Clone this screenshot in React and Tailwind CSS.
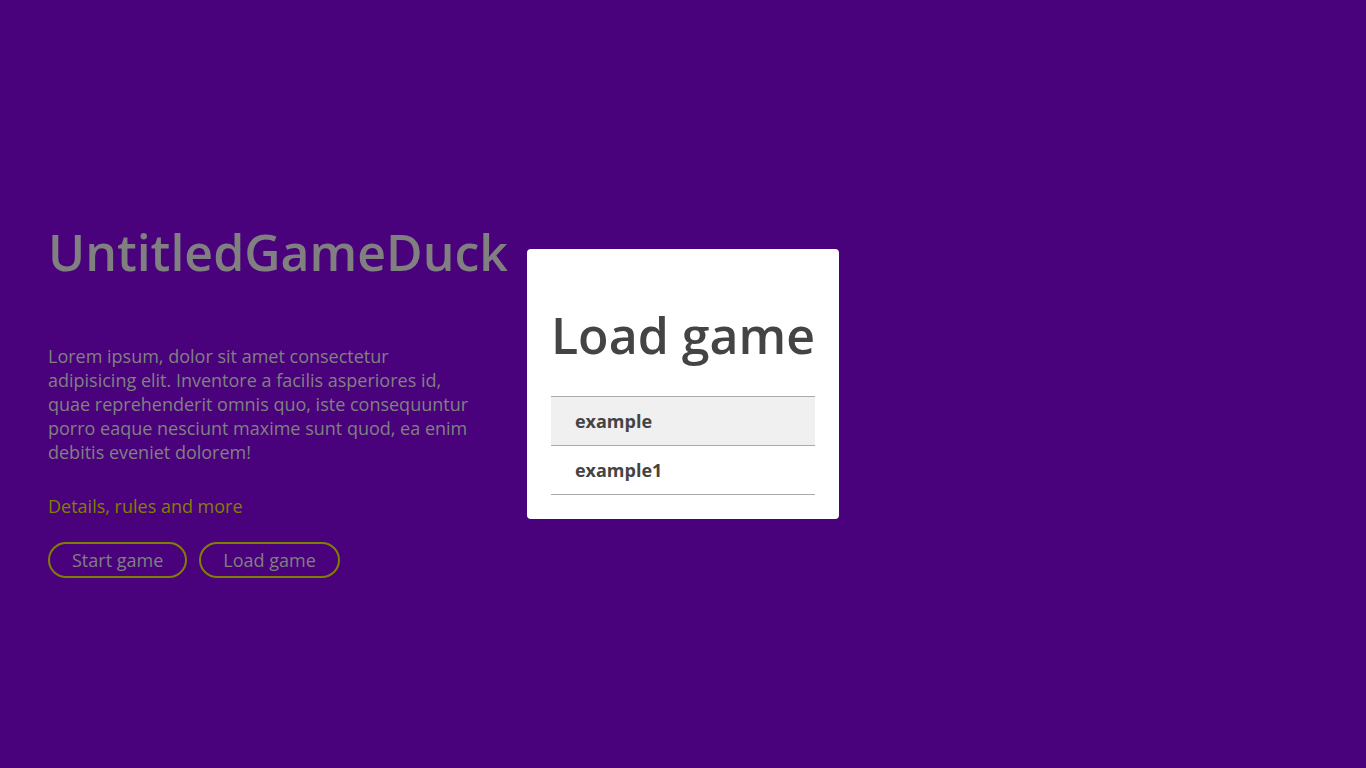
import React, { useState } from "react";

const saves = ["example", "example1"];

export default function App() {
  const [hovered, setHovered] = useState(0);

  return (
    <div
      className="min-h-screen w-full bg-[#4a027c] flex items-center px-12"
      style={{ fontFamily: '"Open Sans", "Noto Sans", sans-serif' }}
    >
      {/* intro */}
      <div className="mt-[28px] flex flex-col">
        <h1 className="text-[50px] leading-[68px] font-semibold text-[#808080] whitespace-nowrap">
          UntitledGameDuck
        </h1>
        <p className="mt-[58px] w-[430px] text-[18px] leading-[24px] text-[#808080]">
          Lorem ipsum, dolor sit amet consectetur adipisicing elit. Inventore a facilis
          asperiores id, quae reprehenderit omnis quo, iste consequuntur porro eaque
          nesciunt maxime sunt quod, ea enim debitis eveniet dolorem!
        </p>
        <a href="#" className="mt-[30px] text-[18px] leading-[24px] text-[#808000]">
          Details, rules and more
        </a>
        <div className="mt-[24px] flex gap-3">
          <button className="h-9 px-[22px] rounded-full border-2 border-[#808000] text-[18px] text-[#808080]">
            Start game
          </button>
          <button className="h-9 px-[22px] rounded-full border-2 border-[#808000] text-[18px] text-[#808080]">
            Load game
          </button>
        </div>
      </div>

      {/* load dialog */}
      <div className="ml-[19px] w-[312px] bg-white rounded px-6 pt-[52px] pb-6">
        <h2 className="text-[50px] leading-[68px] font-semibold text-[#444] whitespace-nowrap">
          Load game
        </h2>
        <ul className="mt-[27px] border-t border-[#aaa]">
          {saves.map((name, i) => (
            <li
              key={name}
              onMouseEnter={() => setHovered(i)}
              className={
                "h-[49px] flex items-center pl-6 border-b border-[#aaa] text-[18px] font-bold text-[#444] " +
                (hovered === i ? "bg-[#f0f0f0]" : "bg-white")
              }
            >
              {name}
            </li>
          ))}
        </ul>
      </div>
    </div>
  );
}
